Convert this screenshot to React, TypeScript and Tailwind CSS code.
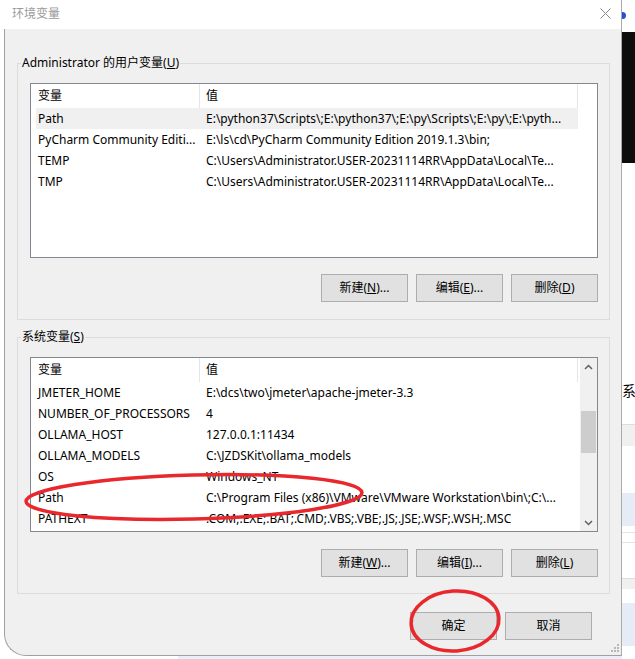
import type { ReactNode } from 'react'

const font = "font-['Segoe_UI','Noto_Sans','Noto_Sans_CJK_SC',sans-serif]"

interface EnvVar {
  name: string
  value: string
  selected?: boolean
}

const userVars: EnvVar[] = [
  { name: 'Path', value: 'E:\\python37\\Scripts\\;E:\\python37\\;E:\\py\\Scripts\\;E:\\py\\;E:\\pyth...', selected: true },
  { name: 'PyCharm Community Editi...', value: 'E:\\ls\\cd\\PyCharm Community Edition 2019.1.3\\bin;' },
  { name: 'TEMP', value: 'C:\\Users\\Administrator.USER-20231114RR\\AppData\\Local\\Te...' },
  { name: 'TMP', value: 'C:\\Users\\Administrator.USER-20231114RR\\AppData\\Local\\Te...' },
]

const systemVars: EnvVar[] = [
  { name: 'JMETER_HOME', value: 'E:\\dcs\\two\\jmeter\\apache-jmeter-3.3' },
  { name: 'NUMBER_OF_PROCESSORS', value: '4' },
  { name: 'OLLAMA_HOST', value: '127.0.0.1:11434' },
  { name: 'OLLAMA_MODELS', value: 'C:\\JZDSKit\\ollama_models' },
  { name: 'OS', value: 'Windows_NT' },
  { name: 'Path', value: 'C:\\Program Files (x86)\\VMware\\VMware Workstation\\bin\\;C:\\...' },
  { name: 'PATHEXT', value: '.COM;.EXE;.BAT;.CMD;.VBS;.VBE;.JS;.JSE;.WSF;.WSH;.MSC' },
]

function Row({ name, value, selected }: EnvVar) {
  return (
    <div className={`flex h-[21px] w-[542px] items-center text-[12px] leading-[21px] ${selected ? 'bg-[#f0f0f0]' : ''}`}>
      <div className="w-[164px] shrink-0 overflow-hidden whitespace-nowrap pl-[2px]">{name}</div>
      <div className="flex-1 overflow-hidden whitespace-nowrap pl-[6px]">{value}</div>
    </div>
  )
}

function Chevron({ up }: { up?: boolean }) {
  return (
    <svg width="9" height="6" viewBox="0 0 9 6">
      <path
        d={up ? 'M1 5 L4.5 1.5 L8 5' : 'M1 1 L4.5 4.5 L8 1'}
        fill="none"
        stroke="#606060"
        strokeWidth="1.5"
      />
    </svg>
  )
}

function Scrollbar() {
  return (
    <div className="flex w-[17px] shrink-0 flex-col bg-[#f0f0f0]">
      <div className="flex h-[17px] items-center justify-center">
        <Chevron up />
      </div>
      <div className="flex-1 px-[1px] pt-[36px]">
        <div className="h-[42px] bg-[#cdcdcd]" />
      </div>
      <div className="flex h-[17px] items-center justify-center">
        <Chevron />
      </div>
    </div>
  )
}

function VarList({ rows, scroll }: { rows: EnvVar[]; scroll?: boolean }) {
  return (
    <div className="ml-[12px] flex h-[175px] w-[568px] border border-[#828790] bg-white">
      <div className="flex-1 overflow-hidden pl-[5px]">
        <div className="flex h-[24px] w-[542px] text-[12px]">
          <div className="flex w-[164px] shrink-0 items-center border-r border-[#e5e5e5] pl-[2px]">变量</div>
          <div className="flex flex-1 items-center border-r border-[#e5e5e5] pl-[6px]">值</div>
        </div>
        {rows.map((r) => (
          <Row key={r.name + r.value} {...r} />
        ))}
      </div>
      {scroll && <Scrollbar />}
    </div>
  )
}

function Btn({ children }: { children: ReactNode }) {
  return (
    <div className="flex h-[28px] w-[87px] items-center justify-center border border-[#adadad] bg-[#e1e1e1] text-[12px] text-black">
      {children}
    </div>
  )
}

function Group({ label, children }: { label: ReactNode; children: ReactNode }) {
  return (
    <fieldset className="ml-[12px] h-[265px] w-[593px] min-w-0 border border-[#dcdcdc] p-0">
      <legend className="ml-[3px] px-[1px] text-[12px] leading-[16px]">{label}</legend>
      {children}
    </fieldset>
  )
}

function RightStrip() {
  return (
    <div className="flex w-[13px] flex-col overflow-hidden bg-white">
      <div className="h-[12px]" />
      <div className="h-[7px] w-[4px] rounded-r-full bg-[#2a4fd6]" />
      <div className="h-[13px]" />
      <div className="h-[131px] bg-[#0d0d0d]" />
      <div className="h-[220px]" />
      <div className="h-[16px] overflow-hidden whitespace-nowrap text-[14px] leading-[16px]">系统</div>
      <div className="h-[25px]" />
      <div className="h-[22px] border-t border-[#dedede] bg-[#f0f0f0]" />
      <div className="h-[47px]" />
      <div className="h-[33px] bg-[#e5ecf6]" />
      <div className="h-[7px] border-b border-[#e3e3e3]" />
      <div className="h-[10px] border-b border-[#e3e3e3]" />
      <div className="h-[36px] border-b border-[#dcdcdc]" />
      <div className="h-[10px] bg-[#f0f0f0]" />
      <div className="h-[14px]" />
      <div className="h-[43px] bg-[#e5ecf6]" />
    </div>
  )
}

export default function App() {
  return (
    <div className={`relative flex h-[659px] w-[635px] overflow-hidden bg-white text-black ${font}`}>
      <div className="flex w-[622px] flex-col">
        <div className="ml-[4px] flex h-[656px] flex-col border-r border-[#aaaaaa]">
          <div className="flex h-[29px] items-center justify-between bg-white pb-[2px] pl-[8px] pr-[10px]">
            <span className="text-[12px] text-[#9a9a9a]">环境变量</span>
            <svg width="11" height="11" viewBox="0 0 11 11">
              <path d="M0.5 0.5 L10.5 10.5 M10.5 0.5 L0.5 10.5" stroke="#8a8a8a" strokeWidth="1" />
            </svg>
          </div>
          <div className="relative flex flex-1 flex-col rounded-bl-[22px] border-b border-l border-[#a0a0a0] bg-[#f0f0f0] pt-[26px]">
            <Group
              label={
                <>
                  Administrator 的用户变量(<span className="underline">U</span>)
                </>
              }
            >
              <div className="mt-[12px]">
                <VarList rows={userVars} />
              </div>
              <div className="mt-[16px] flex justify-end gap-[8px] pr-[11px]">
                <Btn>
                  新建(<span className="underline">N</span>)...
                </Btn>
                <Btn>
                  编辑(<span className="underline">E</span>)...
                </Btn>
                <Btn>
                  删除(<span className="underline">D</span>)
                </Btn>
              </div>
            </Group>
            <div className="mt-[9px]">
              <Group
                label={
                  <>
                    系统变量(<span className="underline">S</span>)
                  </>
                }
              >
                <div className="mt-[12px]">
                  <VarList rows={systemVars} scroll />
                </div>
                <div className="mt-[17px] flex justify-end gap-[8px] pr-[11px]">
                  <Btn>
                    新建(<span className="underline">W</span>)...
                  </Btn>
                  <Btn>
                    编辑(<span className="underline">I</span>)...
                  </Btn>
                  <Btn>
                    删除(<span className="underline">L</span>)
                  </Btn>
                </div>
              </Group>
            </div>
            <div className="mt-[18px] flex justify-end gap-[8px] pr-[29px]">
              <Btn>确定</Btn>
              <Btn>取消</Btn>
            </div>
            <svg className="absolute bottom-[3px] right-[2px]" width="8" height="8" viewBox="0 0 8 8">
              <rect x="6" y="0" width="2" height="2" fill="#b8b8b8" />
              <rect x="3" y="3" width="2" height="2" fill="#b8b8b8" />
              <rect x="6" y="3" width="2" height="2" fill="#b8b8b8" />
              <rect x="0" y="6" width="2" height="2" fill="#b8b8b8" />
              <rect x="3" y="6" width="2" height="2" fill="#b8b8b8" />
              <rect x="6" y="6" width="2" height="2" fill="#b8b8b8" />
            </svg>
          </div>
        </div>
        <div className="flex h-[3px]">
          <div className="w-[178px]" />
          <div className="flex-1 bg-[#e6eef8]" />
        </div>
      </div>
      <RightStrip />
      <svg className="pointer-events-none absolute left-0 top-0" width="635" height="659" viewBox="0 0 635 659">
        <ellipse cx="194" cy="497" rx="168" ry="22" fill="none" stroke="#e8282c" strokeWidth="3.5" transform="rotate(-1.5 194 497)" />
        <ellipse cx="455" cy="621" rx="44" ry="30" fill="none" stroke="#e8282c" strokeWidth="3.5" transform="rotate(-4 455 621)" />
      </svg>
    </div>
  )
}
